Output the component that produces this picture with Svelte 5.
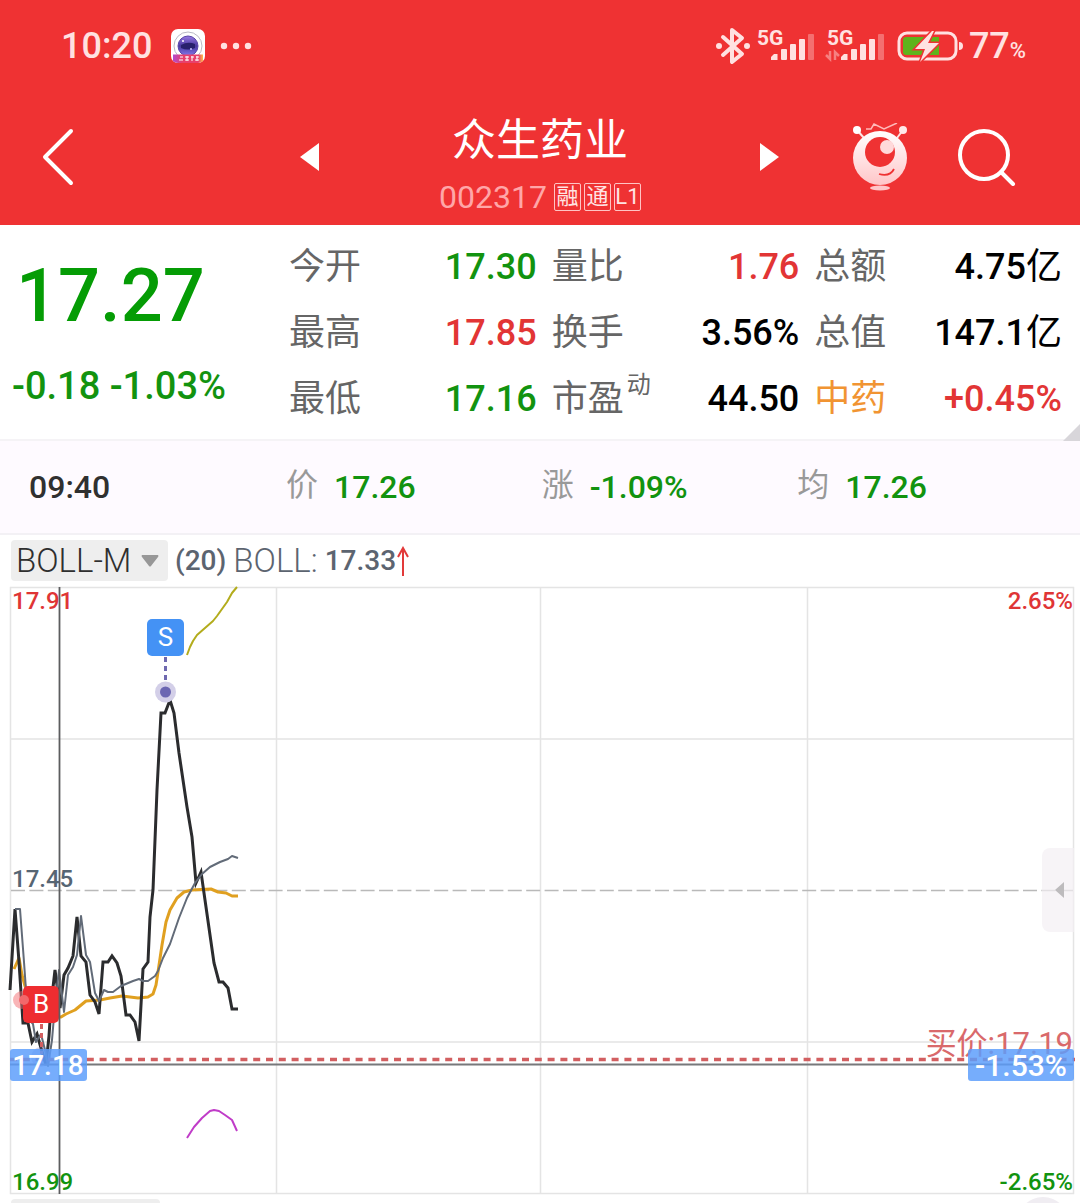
<script>
  const quotes = [
    [
      { label: '今开', value: '17.30', tone: 'down' },
      { label: '最高', value: '17.85', tone: 'up' },
      { label: '最低', value: '17.16', tone: 'down' }
    ],
    [
      { label: '量比', value: '1.76', tone: 'up' },
      { label: '换手', value: '3.56%', tone: 'flat' },
      { label: '市盈', sup: '动', value: '44.50', tone: 'flat' }
    ],
    [
      { label: '总额', value: '4.75', unit: '亿', tone: 'flat' },
      { label: '总值', value: '147.1', unit: '亿', tone: 'flat' },
      { label: '中药', value: '+0.45%', tone: 'up', sector: true }
    ]
  ];

  const readings = [
    { label: '价', value: '17.26' },
    { label: '涨', value: '-1.09%' },
    { label: '均', value: '17.26' }
  ];

  const tags = ['融', '通', 'L1'];
  let indicator = $state('BOLL-M');

  const price =
    '10,990 15,909 19,962 23,1023 28,1023 32,1042 37,1034 41,1048 46,1065 49,1036 51,1005 55,970 60,1008 64,975 68,968 73,956 77,917 81,956 86,962 90,995 95,1002 99,1014 103,962 108,962 112,956 117,963 121,976 126,1015 130,1015 135,1022 139,1041 143,969 148,962 150,917 153,890 157,790 161,713 165,713 170,700 174,713 179,753 187,807 192,837 196,883 201,872 206,907 214,963 219,982 223,982 228,988 232,1009 238,1009';
  const middle =
    '15,909 20,909 24,962 28,1018 33,1024 36,1042 41,1034 45,1050 48,1066 52,1040 55,1005 59,970 64,1012 68,975 73,967 77,955 81,916 86,955 90,962 95,993 99,1001 104,990 108,992 113,992 121,986 133,981 139,979 143,981 148,981 155,976 158,971 163,958 170,944 179,918 187,898 195,883 202,874 210,867 220,862 228,859 232,856 238,858';
  const average =
    '14,969 19,958 22,975 25,986 32,1004 44,1016 61,1017 66,1014 75,1010 86,1001 100,1000 110,998 122,996 138,998 148,997 153,994 156,985 158,972 162,945 166,922 170,910 177,898 184,892 192,890 211,889 218,892 226,893 232,896 238,896';
  const upper = '187,655 190,647 193,641 197,635 205,628 213,621 217,616 227,602 232,593 237,587';
  const lower = '187,1138 194,1127 202,1118 210,1111 214,1110 219,1111 225,1115 232,1120 237,1131';
</script>

<div class="page">
  <header>
    <div class="status">
      <div class="status-left">
        <time>10:20</time>
        <svg class="app" viewBox="0 0 34 34" aria-hidden="true">
          <defs>
            <linearGradient id="ribbon"><stop offset="0" stop-color="#b04ad0" /><stop offset=".3" stop-color="#e8406c" /><stop offset=".85" stop-color="#e8406c" /><stop offset="1" stop-color="#ffc04a" /></linearGradient>
            <linearGradient id="lens" x2="0" y2="1"><stop offset="0" stop-color="#9a7ce4" /><stop offset=".5" stop-color="#4a3aa0" /><stop offset="1" stop-color="#8478ec" /></linearGradient>
            <clipPath id="tile"><rect width="34" height="34" rx="7" /></clipPath>
          </defs>
          <g clip-path="url(#tile)">
            <rect width="34" height="34" fill="#fff" />
            <circle cx="17" cy="17" r="14" fill="none" stroke="#b9bac4" />
            <circle cx="17" cy="17" r="10" fill="url(#lens)" stroke="#5945a8" />
            <path d="M10 16q7-4 14-1v4q-7 3-14 0z" fill="#28216c" />
            <circle cx="12" cy="12" r="1" fill="#fff" /><circle cx="20" cy="20" r="1" fill="#c9c3ff" />
            <path d="M2 25.500h30v9H2z" fill="url(#ribbon)" />
            <path d="M9 28h3M8 31h4M14 28h4M14 31h4M16 27v5M20 28h3M21 27v5M25 28h3M24 31h4M26 27v5" stroke="#fff" />
          </g>
        </svg>
        <svg class="dots" viewBox="0 0 32 8" aria-hidden="true"><g fill="#ffe1e1"><circle cx="4" cy="4" r="3.200" /><circle cx="16" cy="4" r="3.200" /><circle cx="28" cy="4" r="3.200" /></g></svg>
      </div>
      <div class="status-right">
        <svg class="bluetooth" viewBox="0 0 34 38" aria-label="Bluetooth"><path d="M7 10l19 17-10 8V3l10 8L7 28" fill="none" stroke="#ffe1e1" stroke-width="4" stroke-linejoin="round" stroke-linecap="round" /><circle cx="3" cy="19" r="3" fill="#ffe1e1" /><circle cx="31" cy="19" r="3" fill="#ffe1e1" /></svg>
        {#each [false, true] as data}
          <div class="signal">
            <span>5G</span>
            <svg viewBox="0 0 58 32" aria-hidden="true">
              <g fill="#ffe1e1">
                <path d="M14 30v-3l3-3h3.500v6z" /><rect x="24" y="19" width="6" height="11" rx="1" /><rect x="33" y="14" width="6" height="16" rx="1" /><rect x="42" y="9" width="6" height="21" rx="1" />
                <rect x="51" y="4" width="6" height="26" rx="1" opacity=".35" />
              </g>
              {#if data}<path d="M-1 25l4 4v-8M8 30v-8l4 4" fill="none" stroke="#ffe1e1" stroke-width="2.500" opacity=".45" />{/if}
            </svg>
          </div>
        {/each}
        <svg class="battery" viewBox="0 0 68 32" aria-hidden="true">
          <rect x="2" y="3" width="57" height="26" rx="8" fill="none" stroke="#ffe1e1" stroke-width="3" />
          <path d="M9 7h33v18H9q-3 0-3-3V10q0-3 3-3z" fill="#5fb31c" />
          <path d="M62 12q4 0 4 4t-4 4z" fill="#ffe1e1" />
          <path d="M35 1L18 19h10l-5 13 19-19H31l6-12z" fill="#ffe1e1" stroke="#ef3233" stroke-width="3" paint-order="stroke" />
        </svg>
        <span class="percent">77<small>%</small></span>
      </div>
    </div>

    <nav>
      <button class="icon back" aria-label="返回"><svg viewBox="0 0 34 60"><path d="M30 4L4 30l26 26" fill="none" stroke="#fff" stroke-width="4" stroke-linecap="round" stroke-linejoin="round" /></svg></button>
      <div class="switcher">
        <button class="icon step" aria-label="上一只"><svg viewBox="0 0 20 28"><path d="M19 0v28L0 14z" fill="#fff" /></svg></button>
        <div class="title">
          <h1>众生药业</h1>
          <p><span class="code">002317</span>{#each tags as tag}<span class="tag">{tag}</span>{/each}</p>
        </div>
        <button class="icon step" aria-label="下一只"><svg viewBox="0 0 20 28"><path d="M0 0v28l19-14z" fill="#fff" /></svg></button>
      </div>
      <div class="actions">
        <button class="icon mascot" aria-label="助手">
          <svg viewBox="0 0 56 68">
            <defs><linearGradient id="face" x2="0" y2="1"><stop offset="0" stop-color="#fff" /><stop offset="1" stop-color="#ffc6c8" /></linearGradient></defs>
            <path d="M12 15L5 7M45 15l6-8" stroke="#ffe3e3" stroke-width="2" />
            <circle cx="5" cy="7" r="4" fill="#fff" /><circle cx="51" cy="7" r="4" fill="#ffe9e9" />
            <path d="M14 6h5l3-5 10 5 13-6" fill="none" stroke="#ffb9b9" stroke-width="1.500" />
            <circle cx="28" cy="35" r="27" fill="url(#face)" />
            <circle cx="28" cy="29" r="15" fill="#ef3233" /><circle cx="35" cy="24" r="7" fill="#ffd9da" />
            <path d="M27 51q11 3 15-5" fill="none" stroke="#ef3233" stroke-width="1.800" />
            <ellipse cx="28" cy="65" rx="10" ry="2.500" fill="#ffc6c8" />
          </svg>
        </button>
        <button class="icon search" aria-label="搜索"><svg viewBox="0 0 58 58"><circle cx="26" cy="27" r="24" fill="none" stroke="#fff" stroke-width="4" /><path d="M43 44l12 12" stroke="#fff" stroke-width="4" stroke-linecap="round" /></svg></button>
      </div>
    </nav>
  </header>

  <section class="quote">
    <div class="last">
      <strong>17.27</strong>
      <span>-0.18 -1.03%</span>
    </div>
    {#each quotes as column}
      <dl>
        {#each column as q}
          <div>
            <dt class:sector={q.sector}>{q.label}{#if q.sup}<sup>{q.sup}</sup>{/if}</dt>
            <dd class={q.tone}>{q.value}{#if q.unit}<span>{q.unit}</span>{/if}</dd>
          </div>
        {/each}
      </dl>
    {/each}
    <i class="corner"></i>
  </section>

  <section class="readout">
    <time>09:40</time>
    {#each readings as r}
      <p><span>{r.label}</span><b>{r.value}</b></p>
    {/each}
  </section>

  <section class="indicator">
    <label class="picker">
      <select bind:value={indicator} aria-label="指标"><option>BOLL-M</option></select>
      <svg viewBox="0 0 18 12" aria-hidden="true"><path d="M1 0h16q1 1 0 2l-7 9q-1 1-2 0L1 2Q0 1 1 0z" fill="#979797" /></svg>
    </label>
    <p><b>(20)</b><span>BOLL:</span><b>17.33</b></p>
    <svg class="rise" viewBox="0 0 14 30" aria-hidden="true"><path d="M7 30V2M2 11l5-9 5 9" fill="none" stroke="#e23a3a" stroke-width="2" /></svg>
  </section>

  <section class="chart">
    <svg class="plot" viewBox="0 586 1080 609" role="img" aria-label="分时图">
      <g fill="none" stroke="#e4e4e4" stroke-width="1.500">
        <rect x="10.500" y="587.500" width="1063" height="606" />
        <path d="M276.500 588v605M540.500 588v605M807.500 588v605M11 739h1062M11 1042h1062" />
      </g>
      <path d="M11 890.500h1062" stroke="#b9b9b9" stroke-width="1.500" stroke-dasharray="14 4.400" />
      <g class="axis">
        <text x="12" y="609" fill="#df3535">17.91</text>
        <text x="12" y="887" fill="#566573">17.45</text>
        <text x="12" y="1190" fill="#12930f">16.99</text>
        <text x="1073" y="609" fill="#df3535" text-anchor="end">2.65%</text>
        <text x="1073" y="1190" fill="#12930f" text-anchor="end">-2.65%</text>
      </g>
      <g fill="none" stroke-linejoin="round">
        <polyline points={average} stroke="#e0a020" stroke-width="3" />
        <polyline points={price} stroke="#2b2c2e" stroke-width="3" stroke-linejoin="miter" />
        <polyline points={middle} stroke="#626b78" stroke-width="2" />
        <polyline points={upper} stroke="#b3ac1c" stroke-width="2" />
        <polyline points={lower} stroke="#c03cc8" stroke-width="2" />
      </g>
      <text class="bid" x="1073" y="1054" text-anchor="end">买价:17.19</text>
      <path d="M10 1059.500h1065" stroke="#d25f61" stroke-width="3.500" stroke-dasharray="7 5.800" />
      <path d="M10 1064.500h1063" stroke="#77787b" stroke-width="2" />
      <circle cx="22" cy="1000" r="9" fill="#f46c70" opacity=".5" />
      <circle cx="41" cy="1057" r="10" fill="#7570b8" opacity=".3" />
      <path d="M41.500 1024v30" stroke="#d25f61" stroke-width="3" stroke-dasharray="5 4" />
      <rect x="23" y="986" width="36" height="37" rx="5" fill="#ee2d30" />
      <circle cx="24" cy="1000" r="5" fill="#f2686b" />
      <text class="mark" x="41" y="1013">B</text>
      <path d="M59.500 587v607" stroke="#5c5d5f" stroke-width="1.800" />
      <path d="M165.500 657v30" stroke="#6f69b0" stroke-width="3" stroke-dasharray="5 4" />
      <circle cx="165.500" cy="692" r="10.500" fill="#d3cfe8" /><circle cx="165.500" cy="692" r="5.500" fill="#6b66b2" />
      <rect x="147" y="619" width="37" height="37" rx="5" fill="#4492f5" />
      <text class="mark" x="165.500" y="646">S</text>
      <g fill="#5c9dfb" fill-opacity=".84">
        <rect x="10" y="1049" width="77" height="32" rx="3" />
        <rect x="968" y="1049" width="106" height="32" rx="3" />
      </g>
      <text class="cross" x="48" y="1075">17.18</text>
      <text class="cross change" x="1021" y="1076">-1.53%</text>
    </svg>
    <button class="drawer" aria-label="展开"><svg viewBox="0 0 9 16"><path d="M9 0v16L0 8z" fill="#bdbbbd" /></svg></button>
  </section>
  <footer><i class="pill"></i><i class="knob"></i></footer>
</div>

<style>
  :global(body) { margin: 0; background: #fff; }
  .page { font-family: Roboto, 'Noto Sans CJK SC', sans-serif; overflow: hidden; color: #000; }
  h1, p, dl, dd { margin: 0; }
  svg { display: block; flex-shrink: 0; }
  button { padding: 0; border: 0; background: none; cursor: pointer; }

  header { background: #ef3233; color: #fff; }
  .status { display: flex; justify-content: space-between; align-items: center; height: 92px; padding: 0 54px 0 61px; color: #ffe1e1; }
  .status-left, .status-right { display: flex; align-items: center; }
  .status time { font-size: 36px; font-weight: 500; }
  .app { width: 34px; height: 34px; margin-left: 19px; }
  .dots { width: 32px; height: 8px; margin-left: 15px; }
  .bluetooth { width: 34px; height: 38px; margin-right: 7px; }
  .signal { position: relative; width: 58px; height: 32px; margin-right: 12px; }
  .signal span { position: absolute; left: 0; top: -4px; font-size: 21px; line-height: 24px; font-weight: 700; }
  .signal svg { width: 58px; height: 32px; overflow: visible; }
  .battery { width: 68px; height: 32px; margin-right: 4px; }
  .percent { font-size: 36px; font-weight: 500; }
  .percent small { font-size: 22px; }

  nav { display: grid; grid-template-columns: 1fr 480px 1fr; align-items: center; box-sizing: border-box; height: 133px; padding-bottom: 3px; }
  .back { justify-self: start; margin-left: 41px; }
  .back svg { width: 34px; height: 60px; }
  .switcher { display: flex; align-items: center; justify-content: space-between; }
  .step svg { width: 20px; height: 28px; }
  .title { padding-top: 12px; text-align: center; }
  h1 { font-size: 44px; line-height: 60px; font-weight: 400; }
  .title p { display: flex; align-items: center; justify-content: center; gap: 3px; height: 36px; margin-top: 8px; }
  .code { margin-right: 4px; font-size: 32px; font-weight: 400; color: #ffa6a8; }
  .tag { box-sizing: border-box; width: 27px; height: 28px; border: 1px solid #ffc4c4; border-radius: 2px; font-size: 22px; line-height: 26px; color: #ffe4e4; }
  .actions { display: flex; align-items: center; justify-content: flex-end; gap: 50px; padding-right: 64px; }
  .mascot svg { width: 56px; height: 68px; }
  .search svg { width: 58px; height: 58px; }

  .quote { position: relative; display: grid; grid-template-columns: 274px 1fr 1fr 1fr; column-gap: 15px; padding: 9px 18px 7px 0; border-bottom: 2px solid #f5f3f6; }
  .last { display: flex; flex-direction: column; padding-left: 12px; color: #12930f; white-space: nowrap; }
  .last strong { padding: 16px 0 0 4px; font-size: 74px; line-height: 92px; font-weight: 500; color: #059c05; }
  .last span { padding-top: 16px; font-size: 38px; line-height: 56px; font-weight: 500; }
  dl div { display: flex; justify-content: space-between; align-items: center; height: 66px; font-size: 36px; line-height: 42px; }
  dt { position: relative; color: #666; }
  dt.sector { color: #f19432; }
  sup { position: absolute; left: 75px; top: -9px; font-size: 24px; line-height: 32px; }
  dd { font-weight: 500; white-space: nowrap; }
  dd span { font-weight: 400; }
  .up { color: #e23535; }
  .down { color: #12930f; }
  .flat { color: #000; }
  .corner { position: absolute; right: 0; bottom: -2px; width: 17px; height: 17px; background: #d8d6da; clip-path: polygon(100% 0, 100% 100%, 0 100%); }

  .readout { display: grid; grid-template-columns: 257px 1fr 1fr 1fr; align-items: center; height: 92px; padding: 0 27px 0 29px; background: #fefaff; border-bottom: 2px solid #f3f1f5; font-size: 32px; line-height: 38px; }
  .readout time { font-weight: 500; color: #303030; }
  .readout p { display: flex; align-items: center; gap: 16px; }
  .readout span { padding-bottom: 4px; color: #999; }
  .readout b { font-weight: 500; color: #12930f; }

  .indicator { display: flex; align-items: center; height: 51px; padding-left: 11px; }
  .picker { position: relative; display: flex; align-items: center; }
  select { width: 157px; height: 41px; padding: 0 0 0 5px; border: 0; border-radius: 4px; appearance: none; background: #eee; color: #2f2f2f; font: 300 33px Roboto, sans-serif; }
  .picker svg { position: absolute; right: 9px; width: 18px; height: 12px; pointer-events: none; }
  .indicator p { display: flex; align-items: center; gap: 7px; margin-left: 7px; color: #5c6470; white-space: nowrap; }
  .indicator span { font-size: 33px; font-weight: 300; }
  .indicator b { font-size: 28px; font-weight: 500; }
  .rise { width: 14px; height: 30px; }

  .chart { position: relative; }
  .plot { width: 100%; height: auto; }
  .axis { font-size: 24px; font-weight: 500; }
  .bid { font-size: 31px; fill: #d9696b; }
  .mark { font-size: 26px; fill: #fff; text-anchor: middle; }
  .cross { font-size: 28px; font-weight: 500; fill: #fff; text-anchor: middle; }
  .change { font-size: 30px; }
  .drawer { position: absolute; right: 6px; top: 43%; display: flex; align-items: center; justify-content: flex-end; box-sizing: border-box; width: 32px; height: 84px; padding-right: 10px; border-radius: 8px 0 0 8px; background: #f3eff4b3; }
  .drawer svg { width: 9px; height: 16px; }

  footer { display: flex; justify-content: space-between; align-items: flex-start; height: 9px; padding: 0 11px; overflow: hidden; }
  .pill { width: 149px; height: 41px; margin-top: 4px; border-radius: 4px; background: #eee; }
  .knob { width: 52px; height: 52px; margin-top: 2px; border-radius: 50%; background: #f0edf2; }
</style>
